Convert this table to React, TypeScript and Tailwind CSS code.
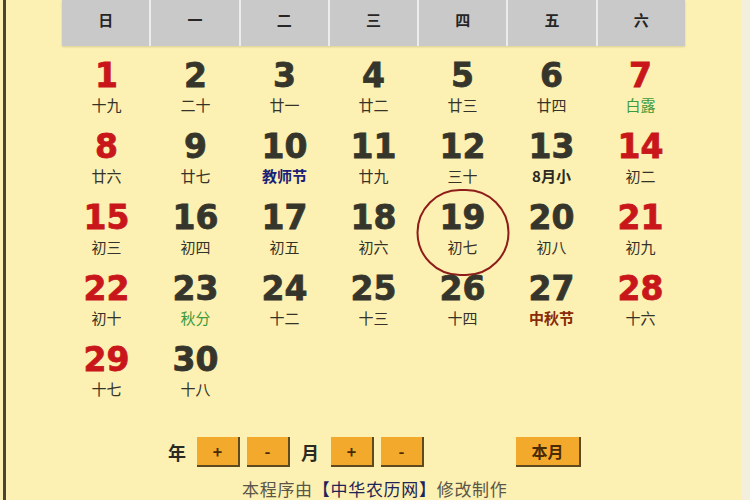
import React from "react";

type Day = {
  n: number;
  lunar: string;
  red?: boolean;
  tone?: "green" | "navy" | "brown" | "bold";
};

const WEEK = ["日", "一", "二", "三", "四", "五", "六"];

const DAYS: Day[] = [
  { n: 1, lunar: "十九", red: true },
  { n: 2, lunar: "二十" },
  { n: 3, lunar: "廿一" },
  { n: 4, lunar: "廿二" },
  { n: 5, lunar: "廿三" },
  { n: 6, lunar: "廿四" },
  { n: 7, lunar: "白露", red: true, tone: "green" },
  { n: 8, lunar: "廿六", red: true },
  { n: 9, lunar: "廿七" },
  { n: 10, lunar: "教师节", tone: "navy" },
  { n: 11, lunar: "廿九" },
  { n: 12, lunar: "三十" },
  { n: 13, lunar: "8月小", tone: "bold" },
  { n: 14, lunar: "初二", red: true },
  { n: 15, lunar: "初三", red: true },
  { n: 16, lunar: "初四" },
  { n: 17, lunar: "初五" },
  { n: 18, lunar: "初六" },
  { n: 19, lunar: "初七" },
  { n: 20, lunar: "初八" },
  { n: 21, lunar: "初九", red: true },
  { n: 22, lunar: "初十", red: true },
  { n: 23, lunar: "秋分", tone: "green" },
  { n: 24, lunar: "十二" },
  { n: 25, lunar: "十三" },
  { n: 26, lunar: "十四" },
  { n: 27, lunar: "中秋节", tone: "brown" },
  { n: 28, lunar: "十六", red: true },
  { n: 29, lunar: "十七", red: true },
  { n: 30, lunar: "十八" },
];

const cjk = "font-['Noto_Sans_CJK_SC',sans-serif]";

function lunarClass(d: Day) {
  if (d.tone === "green") return "text-[#3f9a3a]";
  if (d.tone === "navy") return "text-[#1c1f78] font-bold";
  if (d.tone === "brown") return "text-[#8a2a08] font-bold";
  if (d.tone === "bold") return "text-[#2a2a22] font-bold";
  return "text-[#34332a]";
}

function DayCell({ d }: { d: Day }) {
  return (
    <div className="relative flex h-[71px] flex-col items-center">
      {d.n === 19 && (
        <div className="absolute left-1/2 top-[-12px] h-[87px] w-[93px] -translate-x-1/2 rounded-full border-[2.5px] border-[#8e1d1a]" />
      )}
      <div
        className={`font-['DejaVu_Sans',sans-serif] text-[33px] font-bold leading-[34px] [-webkit-text-stroke:0.8px_currentColor] ${
          d.red ? "text-[#c8161a]" : "text-[#36352b]"
        }`}
      >
        {d.n}
      </div>
      <div className={`${cjk} mt-[3px] text-[15px] leading-[18px] ${lunarClass(d)}`}>
        {d.lunar}
      </div>
    </div>
  );
}

function Btn({ label, w }: { label: string; w: string }) {
  return (
    <button
      className={`${w} flex h-[30px] items-center justify-center border-b-2 border-r-2 border-b-[#5e4a1e] border-r-[#5e4a1e] bg-[#f2a92c] ${cjk} text-[16px] font-bold leading-none text-[#4a2a05]`}
    >
      {label}
    </button>
  );
}

export default function App() {
  return (
    <div className="flex h-[500px] w-[750px] overflow-hidden bg-[#fcf0b2]">
      <div className="ml-[3px] w-[3px] bg-[#4a4532]" />
      <div className="flex flex-1 flex-col">
        <div className="ml-[56px] grid w-[623px] grid-cols-7 gap-x-[2px] bg-[#ececec] shadow-[0_1px_2px_rgba(0,0,0,0.15)]">
          {WEEK.map((w) => (
            <div
              key={w}
              className={`flex h-[46px] items-center justify-center bg-[#c9c9c9] pb-[6px] ${cjk} text-[15px] font-bold text-[#262626]`}
            >
              {w}
            </div>
          ))}
        </div>

        <div className="ml-[56px] mt-[13px] grid w-[623px] grid-cols-7">
          {DAYS.map((d) => (
            <DayCell key={d.n} d={d} />
          ))}
          {Array.from({ length: 5 }).map((_, i) => (
            <div key={`e${i}`} className="h-[71px]" />
          ))}
        </div>

        <div className="mt-[23px] flex items-center pl-[162px]">
          <span className={`${cjk} text-[18px] font-bold text-[#2a2a22]`}>年</span>
          <div className="ml-[11px] flex gap-[7px]">
            <Btn label="+" w="w-[43px]" />
            <Btn label="-" w="w-[43px]" />
          </div>
          <span className={`${cjk} ml-[11px] text-[18px] font-bold text-[#2a2a22]`}>月</span>
          <div className="ml-[12px] flex gap-[7px]">
            <Btn label="+" w="w-[43px]" />
            <Btn label="-" w="w-[43px]" />
          </div>
          <div className="ml-[92px]">
            <Btn label="本月" w="w-[65px]" />
          </div>
        </div>

        <div
          className={`mt-[12px] pl-[236px] ${cjk} text-[17px] leading-[20px] tracking-[0.7px] text-[#5a5648]`}
        >
          本程序由<span className="text-[#1f2458]">【中华农历网】</span>修改制作
        </div>
      </div>
      <div className="w-[8px] bg-[#f3efdc]" />
    </div>
  );
}
